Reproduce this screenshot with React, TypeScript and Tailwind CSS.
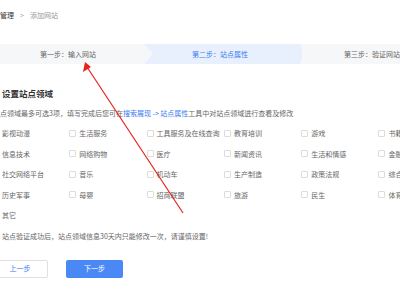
const rows = [
  ["影视动漫", "生活服务", "工具服务及在线查询", "教育培训", "游戏", "书籍阅读"],
  ["信息技术", "网络购物", "医疗", "新闻资讯", "生活和情感", "金融财经"],
  ["社交网络平台", "音乐", "机动车", "生产制造", "政策法规", "综合门户"],
  ["历史军事", "母婴", "招商联盟", "旅游", "民生", "体育运动"],
  ["其它"],
];

function Check({ label }: { label: string }) {
  return (
    <div className="flex items-center gap-[3px] whitespace-nowrap">
      <span className="w-[7px] h-[7px] border border-[#dcdcdc] rounded-[1px] bg-white shrink-0" />
      <span className="text-[7px] leading-[10px] text-[#666]">{label}</span>
    </div>
  );
}

export default function App() {
  return (
    <div
      className="relative w-[400px] h-[300px] overflow-hidden bg-white"
      style={{ fontFamily: '"Noto Sans CJK SC", "Noto Sans", sans-serif' }}
    >
      {/* Breadcrumb */}
      <div className="h-[44px] pt-[11px] flex items-start gap-[6px] ml-[-14px] text-[7px] leading-[8px] whitespace-nowrap">
        <span className="text-[#333]">网站管理</span>
        <span className="text-[#aaa]">&gt;</span>
        <span className="text-[#999]">添加网站</span>
      </div>

      {/* Steps */}
      <div className="h-[20px] flex bg-[#f6f7f8] text-[7px] whitespace-nowrap">
        <div className="w-[147px] flex items-center pl-[40px] text-[#666]">
          第一步：输入网站
        </div>
        <div className="w-[161px] flex items-center pl-[48px] text-[#3b7cf2] bg-[#e8f0fd] [clip-path:polygon(0_0,156px_0,161px_50%,156px_100%,0_100%,9px_50%)]">
          第二步：站点属性
        </div>
        <div className="flex items-center pl-[42px] text-[#666]">第三步：验证网站</div>
      </div>

      {/* Heading */}
      <div className="mt-[23px] ml-[2px] text-[8.5px] leading-[12px] font-bold text-[#333]">
        设置站点领域
      </div>
      <div className="mt-[9px] ml-[-7px] text-[7px] leading-[10px] text-[#666] whitespace-nowrap">
        站点领域最多可选3项，填写完成后您可在<span className="text-[#3b7cf2]">搜索展现</span>
        <span className="text-[#3b7cf2]"> -&gt; </span>
        <span className="text-[#3b7cf2]">站点属性</span>工具中对站点领域进行查看及修改
      </div>

      {/* Domain grid */}
      <div className="mt-[5px] ml-[-8px]">
        {rows.map((row, i) => (
          <div key={i} className="h-[20.5px] grid grid-cols-[repeat(6,77.3px)] items-center">
            {row.map((label) => (
              <Check key={label} label={label} />
            ))}
          </div>
        ))}
      </div>

      <div className="mt-[5px] ml-[2px] text-[7px] leading-[10px] text-[#666] whitespace-nowrap">
        站点验证成功后，站点领域信息30天内只能修改一次，请谨慎设置!
      </div>

      {/* Buttons */}
      <div className="mt-[19px] ml-[-8px] flex gap-[18px]">
        <button className="w-[56px] h-[18px] border border-[#e0e0e0] rounded-[2px] bg-white text-[7px] text-[#3b7cf2]">
          上一步
        </button>
        <button className="w-[57px] h-[18px] rounded-[2px] bg-[#4a89f5] text-[7px] text-white">
          下一步
        </button>
      </div>

      {/* Red annotation arrow */}
      <svg className="absolute left-0 top-0 pointer-events-none" width="400" height="300">
        <line x1="183" y1="213" x2="87" y2="67" stroke="#e8231c" strokeWidth="1.2" />
        <polygon points="85,62 83,72 91,67" fill="#e8231c" />
      </svg>
    </div>
  );
}
